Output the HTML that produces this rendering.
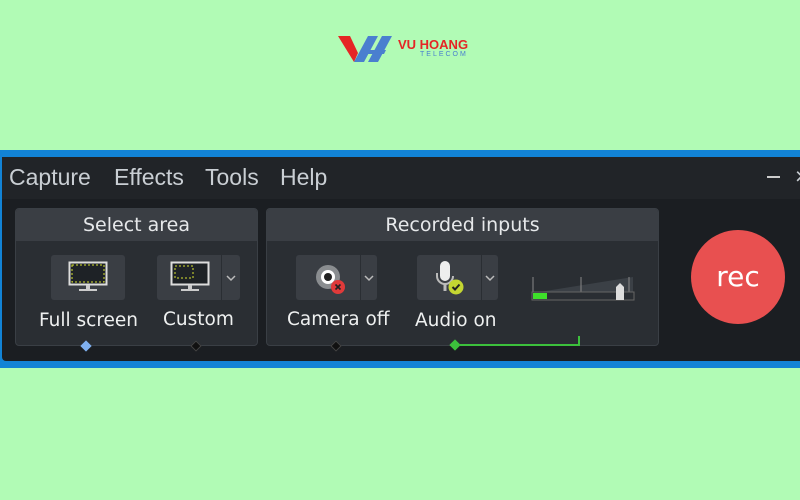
<!DOCTYPE html>
<html><head><meta charset="utf-8"><style>
*{margin:0;padding:0;box-sizing:border-box}
body{width:800px;height:500px;background:#b1fbb5;position:relative;overflow:hidden;font-family:"DejaVu Sans","Liberation Sans",sans-serif}
.abs{position:absolute}
.win{left:0;top:150px;width:800px;height:218px;background:#1283d6}
.dark{left:2px;top:157px;width:798px;height:204px;background:#1b1e22;border-radius:4px 0 0 4px}
.menu{left:2px;top:157px;width:798px;height:42px;background:#212428}
.menu span{position:absolute;top:7px;font-size:23px;color:#c9ced3;font-family:"Liberation Sans",sans-serif}
.panel{background:#2a2e33;border:1px solid #3a3f45;border-radius:4px}
.ph{background:#3a3e44;height:32px;text-align:center;color:#e6e8ea;font-size:19px;line-height:32px;border-radius:3px 3px 0 0}
.btn{background:#3a3e44;border-radius:3px}
.lab{color:#eef0f0;font-size:18.5px;white-space:nowrap}
.dd{background:#3a3e44;border-radius:0 3px 3px 0}
</style></head><body>
<svg class="abs" style="left:338px;top:33px" width="60" height="32" viewBox="0 0 60 32">
<polygon points="0,3 12,3 20,20 16,29" fill="#e52525"/>
<polygon points="16,29 30,3 40,3 26,29" fill="#4a7fcf"/>
<polygon points="30,29 44,3 54,3 40,29" fill="#4a7fcf"/>
<polygon points="26,17 48,17 46,21 24,21" fill="#4a7fcf"/>
</svg>
<div class="abs" style="left:398px;top:37px;color:#e52525;font-weight:bold;font-size:13px;font-family:'Liberation Sans',sans-serif">VU HOANG</div>
<div class="abs" style="left:420px;top:51px;color:#4a7fcf;font-size:7px;letter-spacing:2px;font-family:'Liberation Sans',sans-serif">TELECOM</div>

<div class="abs win"></div>
<div class="abs dark"></div>
<div class="abs menu">
<span style="left:7px">Capture</span><span style="left:112px">Effects</span><span style="left:203px">Tools</span><span style="left:278px">Help</span>
<div class="abs" style="left:765px;top:19px;width:13px;height:2px;background:#ccc"></div>
<span style="left:793px;top:6px">×</span>
</div>

<div class="abs panel" style="left:15px;top:208px;width:243px;height:138px">
<div class="ph">Select area</div>
<div class="abs btn" style="left:35px;top:46px;width:74px;height:45px"></div>
<svg class="abs" style="left:52px;top:52px" width="40" height="32"><rect x="1.5" y="1.5" width="37" height="22" fill="#1e2226" stroke="#ddd" stroke-width="2"/><rect x="4" y="4" width="32" height="17" fill="none" stroke="#d6e230" stroke-dasharray="2,2"/><rect x="18" y="24" width="4" height="4" fill="#ccc"/><rect x="11" y="28" width="18" height="2" fill="#ccc"/></svg>
<div class="abs btn" style="left:141px;top:46px;width:64px;height:45px;border-radius:3px 0 0 3px"></div>
<div class="abs dd" style="left:206px;top:46px;width:18px;height:45px"><svg width="18" height="45"><path d="M5 21 l4 4 4-4" fill="none" stroke="#bbb" stroke-width="1.5"/></svg></div>
<svg class="abs" style="left:154px;top:52px" width="40" height="32"><rect x="1.5" y="1.5" width="37" height="22" fill="#1e2226" stroke="#ddd" stroke-width="2"/><rect x="5" y="5" width="18" height="12" fill="none" stroke="#d6e230" stroke-dasharray="2,2"/><rect x="18" y="24" width="4" height="4" fill="#ccc"/><rect x="11" y="28" width="18" height="2" fill="#ccc"/></svg>
<div class="abs lab" style="left:23px;top:101px">Full screen</div>
<div class="abs lab" style="left:147px;top:100px">Custom</div>
</div>
<div class="abs" style="left:82px;top:342px;width:8px;height:8px;background:#7fb0f0;transform:rotate(45deg)"></div>
<div class="abs" style="left:192px;top:342px;width:8px;height:8px;background:#111;border:1px solid #444;transform:rotate(45deg)"></div>

<div class="abs panel" style="left:266px;top:208px;width:393px;height:138px">
<div class="ph">Recorded inputs</div>
<div class="abs btn" style="left:29px;top:46px;width:64px;height:45px;border-radius:3px 0 0 3px"></div>
<div class="abs dd" style="left:94px;top:46px;width:16px;height:45px"><svg width="16" height="45"><path d="M4 21 l4 4 4-4" fill="none" stroke="#bbb" stroke-width="1.5"/></svg></div>
<svg class="abs" style="left:44px;top:50px" width="40" height="38"><circle cx="17" cy="18" r="12" fill="#8a8d90"/><circle cx="17" cy="18" r="7" fill="#fff"/><circle cx="17" cy="18" r="4" fill="#222"/><circle cx="27" cy="28" r="7" fill="#e03a3a"/><path d="M24.5 25.5 l5 5 M29.5 25.5 l-5 5" stroke="#222" stroke-width="1.6"/></svg>
<div class="abs btn" style="left:150px;top:46px;width:64px;height:45px;border-radius:3px 0 0 3px"></div>
<div class="abs dd" style="left:215px;top:46px;width:16px;height:45px"><svg width="16" height="45"><path d="M4 21 l4 4 4-4" fill="none" stroke="#bbb" stroke-width="1.5"/></svg></div>
<svg class="abs" style="left:162px;top:50px" width="40" height="38"><rect x="11" y="2" width="10" height="20" rx="5" fill="#eee"/><path d="M8 14 v3 a8 8 0 0 0 16 0" fill="none" stroke="#bbb" stroke-width="2"/><rect x="14.5" y="25" width="3" height="7" fill="#bbb"/><circle cx="27" cy="28" r="7.5" fill="#c4d632"/><path d="M23.5 28 l2.5 2.5 4.5-5" fill="none" stroke="#222" stroke-width="2"/></svg>
<div class="abs lab" style="left:20px;top:100px">Camera off</div>
<div class="abs lab" style="left:148px;top:101px">Audio on</div>
<svg class="abs" style="left:264px;top:62px" width="110" height="32"><polygon points="2,22 102,22 102,6" fill="#3b4046"/><line x1="2" y1="6" x2="2" y2="22" stroke="#888"/><line x1="50" y1="6" x2="50" y2="22" stroke="#888"/><line x1="98" y1="6" x2="98" y2="22" stroke="#888"/><rect x="1" y="21" width="102" height="8" fill="#2a2e33" stroke="#666"/><rect x="2" y="22" width="14" height="6" fill="#3ee02a"/><path d="M85 16 l4-4 4 4 v13 h-8z" fill="#ddd"/></svg>
</div>
<div class="abs" style="left:332px;top:342px;width:8px;height:8px;background:#111;border:1px solid #444;transform:rotate(45deg)"></div>
<div class="abs" style="left:460px;top:344px;width:120px;height:2px;background:#3cc03c"></div>
<div class="abs" style="left:578px;top:336px;width:2px;height:10px;background:#3cc03c"></div>
<div class="abs" style="left:451px;top:341px;width:8px;height:8px;background:#3cc03c;transform:rotate(45deg)"></div>

<div class="abs" style="left:691px;top:230px;width:94px;height:94px;border-radius:50%;background:#e85050;color:#fff;font-size:28px;text-align:center;line-height:94px">rec</div>
</body></html>
